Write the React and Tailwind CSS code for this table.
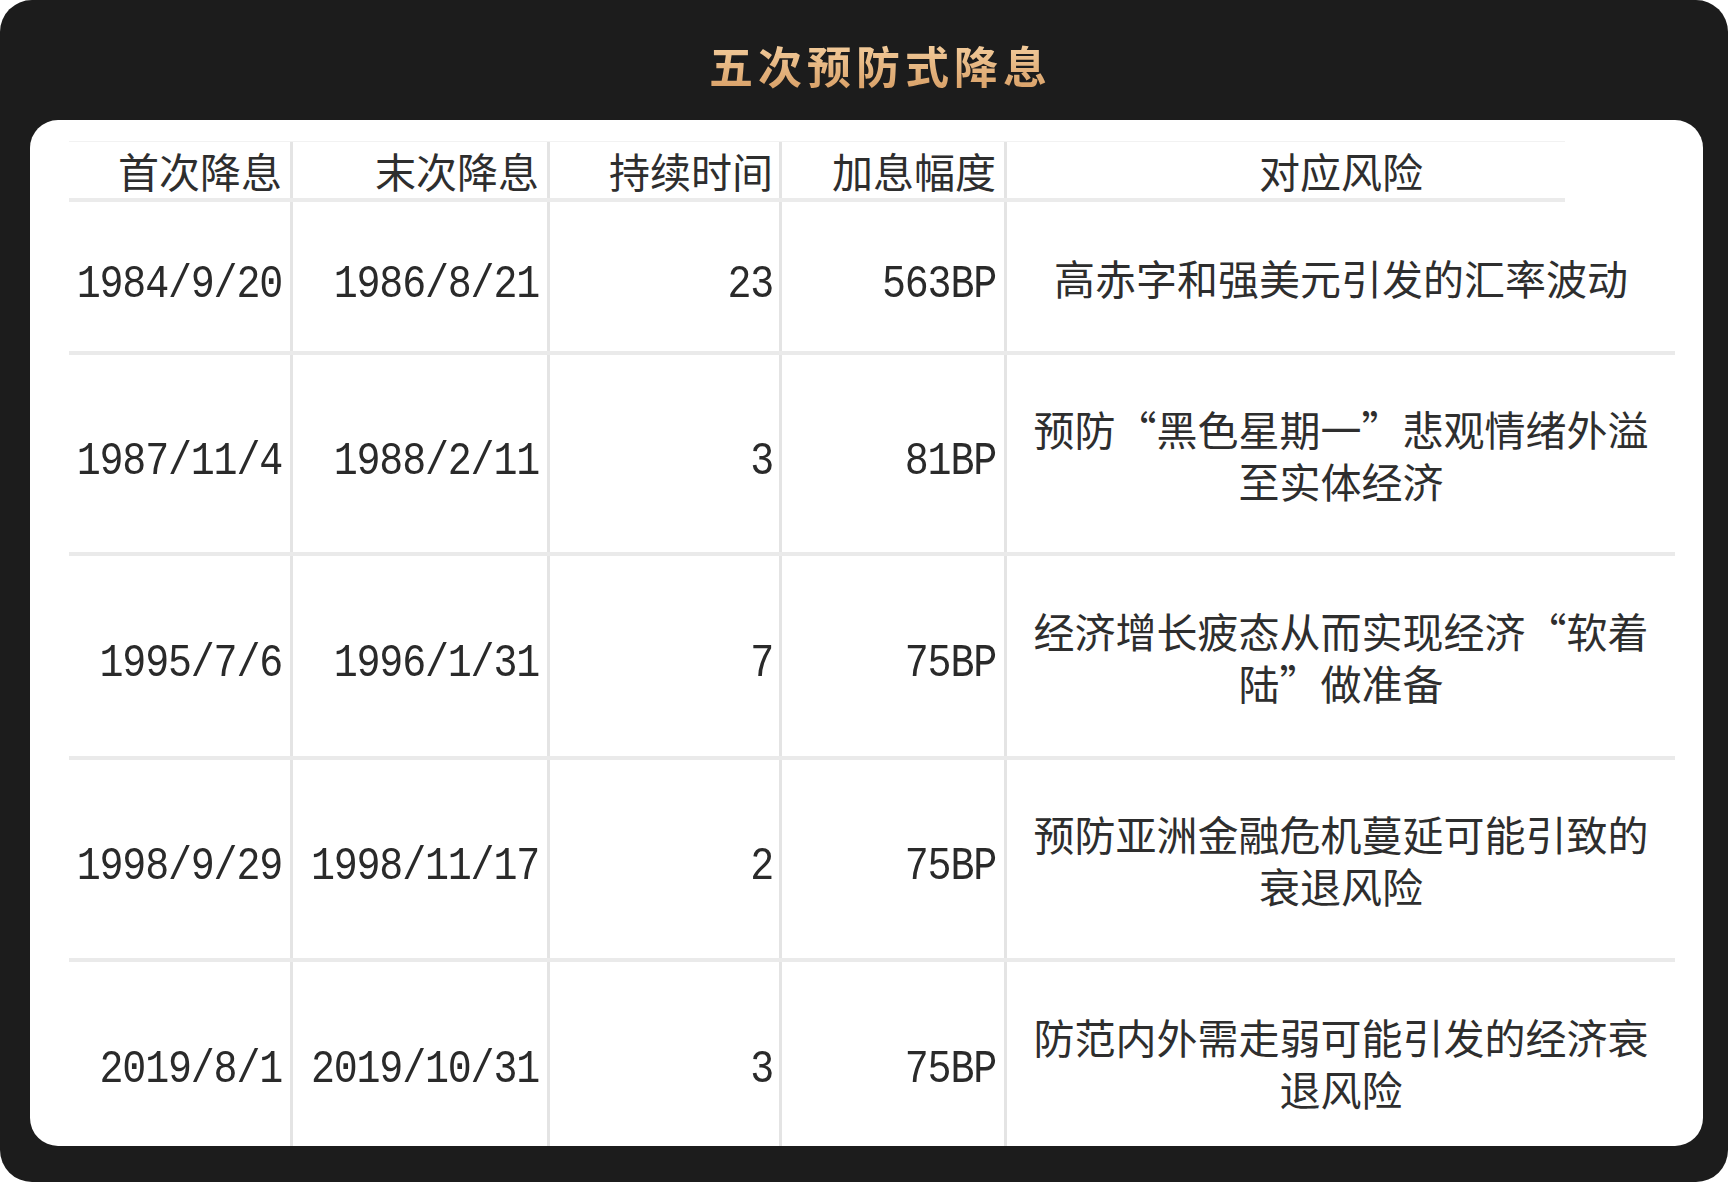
const rows = [
  {
    first: "1984/9/20",
    last: "1986/8/21",
    months: "23",
    bp: "563BP",
    risk: ["高赤字和强美元引发的汇率波动"],
    h: "h-[153px]",
  },
  {
    first: "1987/11/4",
    last: "1988/2/11",
    months: "3",
    bp: "81BP",
    risk: ["预防“黑色星期一”悲观情绪外溢", "至实体经济"],
    h: "h-[201px]",
  },
  {
    first: "1995/7/6",
    last: "1996/1/31",
    months: "7",
    bp: "75BP",
    risk: ["经济增长疲态从而实现经济“软着", "陆”做准备"],
    h: "h-[204px]",
  },
  {
    first: "1998/9/29",
    last: "1998/11/17",
    months: "2",
    bp: "75BP",
    risk: ["预防亚洲金融危机蔓延可能引致的", "衰退风险"],
    h: "h-[202px]",
  },
  {
    first: "2019/8/1",
    last: "2019/10/31",
    months: "3",
    bp: "75BP",
    risk: ["防范内外需走弱可能引发的经济衰", "退风险"],
    h: "h-[204px]",
  },
];

// 숫자 셀 (오른쪽 정렬)
const NumCell = ({ w, pr = "pr-2", children }) => (
  <div
    className={`${w} ${pr} flex items-center justify-end pt-[16px] border-r-[3px] border-[#e4e4e4] font-['Liberation_Mono','Noto_Sans_CJK_SC',monospace] text-[40px] tracking-[-1.2px] text-[#2a2a2a] whitespace-nowrap`}
  >
    <span className="inline-block scale-y-[1.15]">{children}</span>
  </div>
);

// 헤더 셀
const HeadCell = ({ w, pr = "pr-2", children }) => (
  <div
    className={`${w} ${pr} flex items-center justify-end border-r-[3px] border-[#e4e4e4] whitespace-nowrap`}
  >
    {children}
  </div>
);

export default function App() {
  return (
    <div className="min-h-screen bg-white">
      <div className="h-[1182px] rounded-[32px] bg-[#1c1c1c] pl-[30px] pr-[25px] pt-[43px] pb-[36px] flex flex-col">
        {/* 제목 */}
        <div className="h-[44px] mb-[33px] pl-[28px] text-center">
          <span className="font-['Noto_Sans_CJK_SC',sans-serif] font-semibold text-[44px] leading-[44px] tracking-[5px] bg-linear-to-b from-[#f8d6a8] to-[#d59a5f] bg-clip-text text-transparent">
            五次预防式降息
          </span>
        </div>

        {/* 표 패널 */}
        <div className="flex-1 overflow-hidden rounded-[28px] bg-white pl-[39px] pt-[21px]">
          <div className="w-[1606px] font-['Noto_Sans_CJK_SC',sans-serif] text-[41px] text-[#2e2e2e]">
            {/* 헤더 */}
            <div className="w-[1496px] h-px bg-[#f2f2f2]" />
            <div className="flex h-[56px] leading-none">
              <HeadCell w="w-[224px]">首次降息</HeadCell>
              <HeadCell w="w-[257px]">末次降息</HeadCell>
              <HeadCell w="w-[232px]" pr="pr-[6px]">持续时间</HeadCell>
              <HeadCell w="w-[225px]">加息幅度</HeadCell>
              <div className="w-[668px] flex items-center justify-center whitespace-nowrap">
                对应风险
              </div>
            </div>
            <div className="w-[1496px] h-[4px] bg-[#ebebeb]" />

            {/* 데이터 행 */}
            {rows.map((r) => (
              <div
                key={r.first}
                className={`${r.h} flex border-b-4 border-[#eaeaea]`}
              >
                <NumCell w="w-[224px]">{r.first}</NumCell>
                <NumCell w="w-[257px]">{r.last}</NumCell>
                <NumCell w="w-[232px]" pr="pr-[6px]">
                  {r.months}
                </NumCell>
                <NumCell w="w-[225px]">{r.bp}</NumCell>
                <div className="w-[668px] flex flex-col items-center justify-center leading-[52px]">
                  {r.risk.map((line) => (
                    <span key={line} className="whitespace-nowrap">
                      {line}
                    </span>
                  ))}
                </div>
              </div>
            ))}
          </div>
        </div>
      </div>
    </div>
  );
}
